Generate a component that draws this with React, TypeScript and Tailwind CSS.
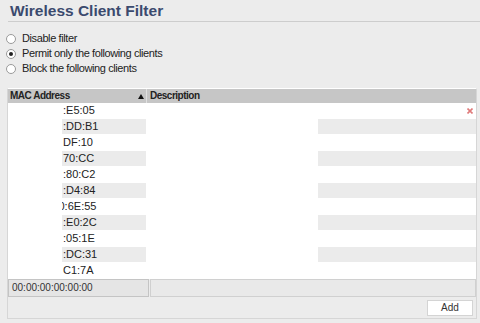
import React from "react";

const MACS = [":E5:05", ":DD:B1", "DF:10", "70:CC", ":80:C2", ":D4:84", "0:6E:55", ":E0:2C", ":05:1E", ":DC:31", "C1:7A"];

const MODES = [
  { label: "Disable filter", checked: false },
  { label: "Permit only the following clients", checked: true },
  { label: "Block the following clients", checked: false },
];

function Radio({ checked }: { checked: boolean }) {
  return (
    <span className="w-[10px] h-[10px] rounded-full border border-[#9a9a9a] bg-white flex items-center justify-center shrink-0">
      {checked && <span className="w-[4px] h-[4px] rounded-full bg-[#222]" />}
    </span>
  );
}

export default function App() {
  return (
    <div className="w-[480px] h-[323px] bg-[#ececec] font-['Liberation_Sans',Arial,sans-serif] text-[#222] overflow-hidden">
      <h1 className="h-[21px] pl-[10px] pt-[1px] text-[15.5px] leading-[19px] font-bold text-[#3b4a6e]">Wireless Client Filter</h1>
      <div className="ml-[8px] border-t border-[#cdcdcd] h-[1px] bg-[#f6f6f6]" />

      <div className="pt-[9px] pl-[6px] flex flex-col">
        {MODES.map((m) => (
          <label key={m.label} className="h-[15px] flex items-center gap-[6px] text-[11px] tracking-[-0.4px] text-[#222]">
            <Radio checked={m.checked} />
            <span>{m.label}</span>
          </label>
        ))}
      </div>

      <div className="mt-[12px] ml-[7px] w-[470px] h-[231px] border border-[#d6d6d6] border-t-white flex flex-col">
        <div className="h-[14px] bg-[#c6c6c6] flex text-[10px] font-bold tracking-[-0.5px] leading-[14px]">
          <div className="w-[139px] pl-[2px] flex items-center justify-between pr-[2px] border-r border-[#e0e0e0]">
            <span>MAC Address</span>
            <svg width="6" height="5" viewBox="0 0 6 5"><path d="M3 0L6 5H0Z" fill="#111" /></svg>
          </div>
          <div className="pl-[3px]">Description</div>
        </div>

        {MACS.map((mac, i) => {
          const stripe = i % 2 === 1 ? "bg-[#ebebeb]" : "bg-white";
          return (
            <div key={i} className="h-[16px] flex bg-white text-[11px] leading-[15px]">
              <div className="w-[54px]" />
              <div className={`w-[84px] h-[15px] overflow-hidden whitespace-nowrap ${stripe}`}>
                <span className={`block pl-[1px] ${mac === "0:6E:55" ? "ml-[-4.5px]" : ""}`}>{mac}</span>
              </div>
              <div className="w-[172px]" />
              <div className={`flex-1 h-[15px] flex items-center justify-end pr-[3px] ${stripe}`}>
                {i === 0 && (
                  <svg width="6" height="6" viewBox="0 0 6 6">
                    <path d="M0.5 0.5L5.5 5.5M5.5 0.5L0.5 5.5" stroke="#df7a7a" strokeWidth="1.6" />
                  </svg>
                )}
              </div>
            </div>
          );
        })}

        <div className="h-[18px] flex text-[10px]">
          <div className="w-[141px] bg-[#e5e5e5] border border-[#c4c4c4] pl-[3px] leading-[16px] text-[#333]">00:00:00:00:00:00</div>
          <div className="flex-1 ml-[1px] bg-[#e9e9e9] border border-[#d0d0d0]" />
        </div>

        <div className="flex-1 flex items-center justify-end pr-[3px]">
          <button className="w-[46px] h-[16px] bg-white border border-[#d4d4d4] text-[10px] text-[#333] leading-[14px]">Add</button>
        </div>
      </div>
    </div>
  );
}
